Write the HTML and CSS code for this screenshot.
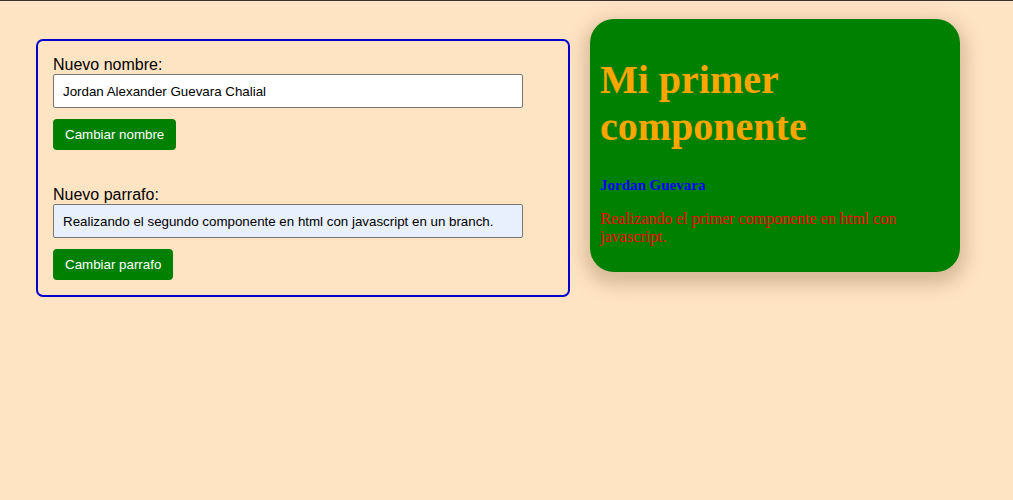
FILE: index.html
```html
<!DOCTYPE html>
<html lang="es">
<head>
<meta charset="utf-8">
<title>Componente</title>
<link rel="stylesheet" href="styles.css">
</head>
<body>
<div class="topline"></div>
<main class="layout">
  <section class="form-panel">
    <div class="field">
      <label class="label" for="nombre">Nuevo nombre:</label>
      <input class="input" id="nombre" type="text" value="Jordan Alexander Guevara Chalial">
      <button class="btn" type="button">Cambiar nombre</button>
    </div>
    <div class="field field-second">
      <label class="label" for="parrafo">Nuevo parrafo:</label>
      <input class="input input-autofill" id="parrafo" type="text" value="Realizando el segundo componente en html con javascript en un branch.">
      <button class="btn" type="button">Cambiar parrafo</button>
    </div>
  </section>
  <article class="card">
    <h1 class="card-title">Mi primer componente</h1>
    <p class="card-author">Jordan Guevara</p>
    <p class="card-text">Realizando el primer componente en html con javascript.</p>
  </article>
</main>
</body>
</html>
```
FILE: styles.css
```css
html, body {
  margin: 0;
  padding: 0;
  background: #ffe4c4;
}
body {
  font-family: "Liberation Sans", Arial, sans-serif;
  min-height: 500px;
}
.topline {
  height: 1px;
  background: #3a3330;
}
.layout {
  display: flex;
  align-items: flex-start;
  padding: 18px 0 0 36px;
  gap: 20px;
}
.form-panel {
  margin-top: 20px;
  width: 500px;
  padding: 15px;
  border: 2px solid #0000cd;
  border-radius: 7px;
}
.field {
  display: flex;
  flex-direction: column;
  align-items: flex-start;
}
.field-second {
  margin-top: 36px;
}
.label {
  font-size: 16px;
  line-height: 18px;
  color: #000;
}
.input {
  box-sizing: border-box;
  width: 470px;
  height: 34px;
  padding: 0 9px;
  border: 1px solid #767676;
  border-radius: 2px;
  background: #fff;
  font-family: "Liberation Sans", Arial, sans-serif;
  font-size: 13.33px;
  color: #000;
}
.input-autofill {
  background: #e8f0fe;
}
.btn {
  margin-top: 11px;
  height: 31px;
  padding: 0 12px;
  border: none;
  border-radius: 4px;
  background: #008000;
  color: #fff;
  font-family: "Liberation Sans", Arial, sans-serif;
  font-size: 13.33px;
}
.card {
  width: 350px;
  padding: 10px;
  background: #008000;
  border-radius: 24px;
  box-shadow: 0 7px 18px 6px rgba(110, 80, 40, 0.28);
  font-family: "Liberation Serif", "Times New Roman", serif;
}
.card-title {
  margin: 26.8px 0;
  font-size: 40px;
  font-weight: bold;
  color: #ffa500;
}
.card-author {
  margin: 16px 0;
  font-size: 15px;
  font-weight: bold;
  color: #0000ff;
}
.card-text {
  margin: 16px 0;
  font-size: 16px;
  color: #ff0000;
}
```
